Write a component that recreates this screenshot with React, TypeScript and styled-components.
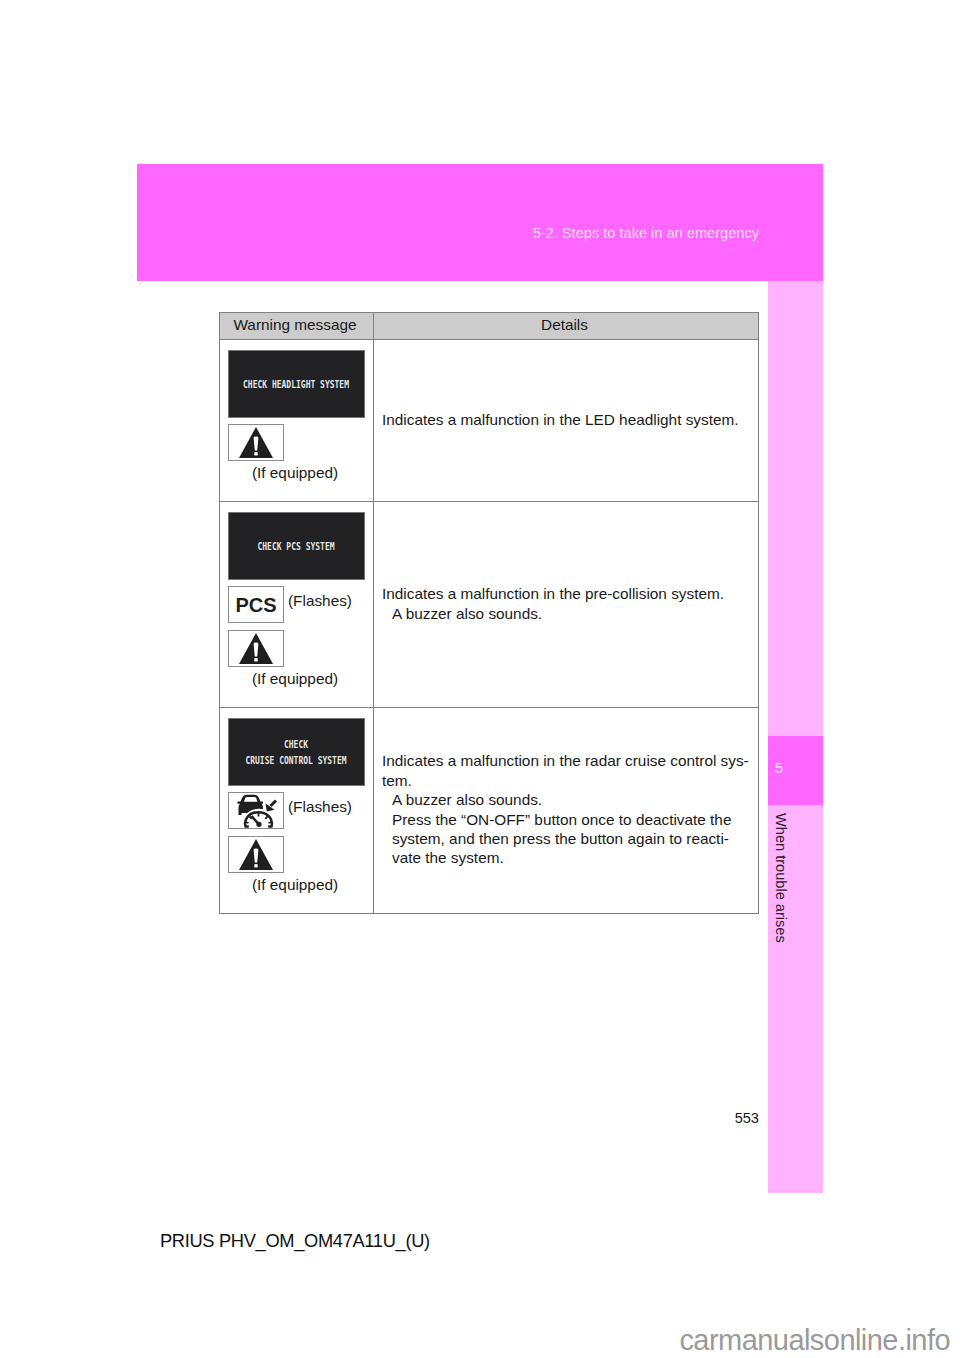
import React from "react";
import styled, { createGlobalStyle } from "styled-components";

const Global = createGlobalStyle`
  html, body { margin: 0; padding: 0; background: #fff; }
  body { font-family: "Liberation Sans", Arial, sans-serif; color: #1a1a1a; }
`;

const Page = styled.div`
  width: 960px;
  height: 1358px;
  display: flex;
  flex-direction: column;
  padding-top: 164px;
  box-sizing: border-box;
  overflow: hidden;
`;

const Sheet = styled.div`
  width: 686px;
  margin-left: 137px;
  display: flex;
  flex-direction: column;
`;

const Banner = styled.header`
  height: 117px;
  background: #ff66ff;
  display: flex;
  justify-content: flex-end;
  padding: 60px 64px 0 0;
  box-sizing: border-box;
  font-size: 14.6px;
  line-height: 18px;
`;

const BannerText = styled.span`
  color: #ffdcff;
`;

const Body = styled.div`
  display: flex;
  height: 912px;
`;

const Main = styled.main`
  flex: 1;
  display: flex;
  flex-direction: column;
  padding: 31px 9px 0 82px;
  min-width: 0;
`;

const Sidebar = styled.aside`
  width: 55px;
  background: #ffb3ff;
  padding-top: 455px;
  box-sizing: border-box;
`;

const ChapterTab = styled.div`
  height: 69px;
  background: #ff66ff;
  color: #ffe6ff;
  font-size: 14.6px;
  padding: 24px 0 0 7px;
  box-sizing: border-box;
  line-height: 17px;
`;

const ChapterName = styled.div`
  writing-mode: vertical-rl;
  font-size: 14.6px;
  line-height: 18px;
  margin: 8px 0 0 4px;
  color: #2a1a2a;
  white-space: nowrap;
`;

const Table = styled.table`
  width: 540px;
  border-collapse: collapse;
  table-layout: fixed;
  font-size: 15.35px;
  line-height: 19.4px;
`;

const HeadCell = styled.th`
  height: 27px;
  padding: 0 3px 3px 0;
  background: #cccccc;
  border: 1px solid #808080;
  font-weight: 400;
  text-align: center;
  box-sizing: border-box;
`;

const Row = styled.tr<{ $h: number }>`
  height: ${(p) => p.$h}px;
`;

const MessageCell = styled.td`
  padding: 10px 0 0 8px;
  border: 1px solid #808080;
  vertical-align: top;
  box-sizing: border-box;
`;

const DetailCell = styled.td`
  padding: 0 8px 2px;
  border: 1px solid #808080;
  vertical-align: middle;
  box-sizing: border-box;
`;

const Indented = styled.div`
  padding-left: 10px;
`;

const Screen = styled.div`
  width: 137px;
  height: 68px;
  background: #222124;
  border: 1px solid #77757a;
  box-sizing: border-box;
  display: flex;
  flex-direction: column;
  align-items: center;
  justify-content: center;
  gap: 6px;
  padding: 4px 1px 0 0;
  color: #e6e6e6;
  font-family: "DejaVu Sans Mono", "Liberation Mono", monospace;
  font-weight: 700;
  font-size: 8px;
  line-height: 10px;
  white-space: pre;
`;

const ScreenLine = styled.span`
  display: block;
  transform: scaleY(1.2);
`;

const IconRow = styled.div<{ $gap?: number }>`
  display: flex;
  gap: 4px;
  margin-top: ${(p) => p.$gap ?? 6}px;
  align-items: flex-start;
`;

const IconBox = styled.div`
  width: 56px;
  height: 37px;
  border: 1px solid #8c8c8c;
  box-sizing: border-box;
  background: #fff;
  display: flex;
  align-items: center;
  justify-content: center;
  font-weight: 700;
  font-size: 20px;
  color: #1f1f1f;
`;

const PcsLabel = styled.span`
  padding-top: 2px;
`;

const Flashes = styled.span`
  line-height: 19px;
  margin-top: 5px;
`;

const Equipped = styled.div`
  width: 134px;
  text-align: center;
  margin-top: 2px;
`;

const PageNumber = styled.div`
  margin-top: auto;
  margin-bottom: 66px;
  text-align: right;
  font-size: 14.6px;
  line-height: 18px;
`;

const Footer = styled.footer`
  margin: 37px 0 0 160px;
  font-size: 18.3px;
  letter-spacing: -0.33px;
  line-height: 21px;
  color: #111;
`;

const Watermark = styled.div`
  margin-top: 74px;
  align-self: flex-end;
  margin-right: 10px;
  font-size: 29px;
  line-height: 30px;
  color: #9a9a9a;
  letter-spacing: -0.55px;
`;

const Warning = () => (
  <svg width="34" height="31" viewBox="0 0 34 31" aria-hidden="true">
    <path d="M17 0 L34 31 H0 Z" fill="#1f1f1f" />
    <path d="M14.6 11 Q14.6 9.6 17 9.6 Q19.4 9.6 19.4 11 L18.2 23.5 H15.8 Z" fill="#fff" />
    <rect x="15.3" y="25" width="3.4" height="3.6" rx="0.9" fill="#fff" />
  </svg>
);

const CruiseIcon = () => (
  <svg width="54" height="35" viewBox="0 0 54 35" aria-hidden="true">
    <path
      fillRule="evenodd"
      fill="#1f1f1f"
      d="M11.5 8.5 L13.5 4 Q14.8 1.8 18 1.8 H25 Q28.2 1.8 29.5 4 L31.5 8.5 H34 V10.8 H32.5 Q34 12.5 34 14.5 V20 H12.5 V22 H9.5 V14.5 Q9.5 12.5 11 10.8 H8.5 V8.5 Z M16.5 4.6 L15 8.8 H28.5 L27 4.6 Q26.5 4 25 4 H18 Q17 4 16.5 4.6 Z"
    />
    <path d="M16 33.5 C14 26 20 18 29.5 18 C39 18 45 26 43 33.5" fill="#fff" stroke="#fff" strokeWidth="4.5" />
    <path d="M19.8 33.6 H16.6 C14.2 26 20.5 19.2 29.5 19.2 C38.5 19.2 44.8 26 42.4 33.6 H39.2" fill="none" stroke="#1f1f1f" strokeWidth="2.5" />
    <path d="M29.5 20 V23.5 M20.5 23.5 L22.8 25.8 M38.5 23.5 L36.2 25.8 M16.5 29 L19.5 30 M42.5 29 L39.5 30" stroke="#1f1f1f" strokeWidth="1.8" />
    <path d="M22.5 23 L29.5 31" stroke="#1f1f1f" strokeWidth="2.6" />
    <circle cx="30" cy="31.3" r="2.6" fill="#1f1f1f" />
    <path d="M47 7.5 L41.5 13" stroke="#1f1f1f" strokeWidth="3" />
    <path d="M36.5 10.5 L37.8 18.5 L45.5 16.8 Z" fill="#1f1f1f" />
  </svg>
);

export default function App() {
  return (
    <Page>
      <Global />
      <Sheet>
        <Banner>
          <BannerText>5-2. Steps to take in an emergency</BannerText>
        </Banner>
        <Body>
          <Main>
            <Table>
              <colgroup>
                <col style={{ width: 154 }} />
                <col />
              </colgroup>
              <thead>
                <tr>
                  <HeadCell>Warning message</HeadCell>
                  <HeadCell>Details</HeadCell>
                </tr>
              </thead>
              <tbody>
                <Row $h={162}>
                  <MessageCell>
                    <Screen>
                      <ScreenLine>CHECK HEADLIGHT SYSTEM</ScreenLine>
                    </Screen>
                    <IconRow>
                      <IconBox><Warning /></IconBox>
                    </IconRow>
                    <Equipped>(If equipped)</Equipped>
                  </MessageCell>
                  <DetailCell>Indicates a malfunction in the LED headlight system.</DetailCell>
                </Row>
                <Row $h={206}>
                  <MessageCell>
                    <Screen>
                      <ScreenLine>CHECK PCS SYSTEM</ScreenLine>
                    </Screen>
                    <IconRow>
                      <IconBox><PcsLabel>PCS</PcsLabel></IconBox>
                      <Flashes>(Flashes)</Flashes>
                    </IconRow>
                    <IconRow $gap={7}>
                      <IconBox><Warning /></IconBox>
                    </IconRow>
                    <Equipped>(If equipped)</Equipped>
                  </MessageCell>
                  <DetailCell>
                    Indicates a malfunction in the pre-collision system.
                    <Indented>A buzzer also sounds.</Indented>
                  </DetailCell>
                </Row>
                <Row $h={206}>
                  <MessageCell>
                    <Screen>
                      <ScreenLine>CHECK</ScreenLine>
                      <ScreenLine>CRUISE CONTROL SYSTEM</ScreenLine>
                    </Screen>
                    <IconRow>
                      <IconBox><CruiseIcon /></IconBox>
                      <Flashes>(Flashes)</Flashes>
                    </IconRow>
                    <IconRow $gap={7}>
                      <IconBox><Warning /></IconBox>
                    </IconRow>
                    <Equipped>(If equipped)</Equipped>
                  </MessageCell>
                  <DetailCell>
                    Indicates a malfunction in the radar cruise control sys-
                    <br />
                    tem.
                    <Indented>
                      A buzzer also sounds.
                      <br />
                      Press the “ON-OFF” button once to deactivate the
                      <br />
                      system, and then press the button again to reacti-
                      <br />
                      vate the system.
                    </Indented>
                  </DetailCell>
                </Row>
              </tbody>
            </Table>
            <PageNumber>553</PageNumber>
          </Main>
          <Sidebar>
            <ChapterTab>5</ChapterTab>
            <ChapterName>When trouble arises</ChapterName>
          </Sidebar>
        </Body>
      </Sheet>
      <Footer>PRIUS PHV_OM_OM47A11U_(U)</Footer>
      <Watermark>carmanualsonline.info</Watermark>
    </Page>
  );
}
